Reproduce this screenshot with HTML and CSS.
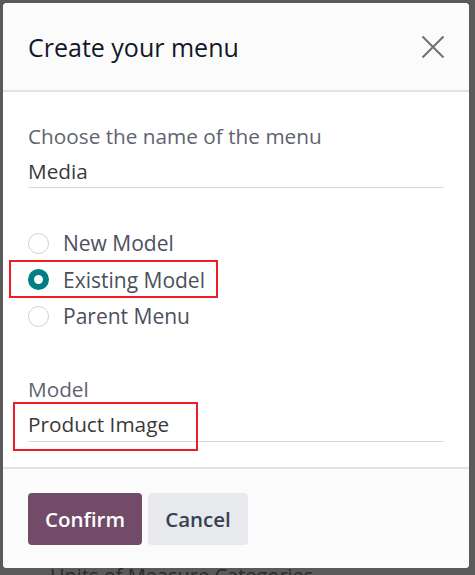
FILE: index.html
```html
<!DOCTYPE html>
<html>
<head>
<meta charset="utf-8">
<link rel="stylesheet" href="styles.css">
</head>
<body>
<div class="page">
  <div class="page-line">Units of Measure Categories</div>
</div>
<div class="modal">
  <div class="modal-header">
    <h1 class="modal-title">Create your menu</h1>
    <svg class="close" width="24" height="24" viewBox="0 0 24 24"><path d="M1.5 1.5 L22.5 22.5 M22.5 1.5 L1.5 22.5" stroke="#707070" stroke-width="2" fill="none"/></svg>
  </div>
  <div class="modal-body">
    <div class="field">
      <div class="label">Choose the name of the menu</div>
      <div class="input">Media</div>
    </div>
    <div class="radios">
      <div class="radio"><span class="dot"></span><span>New Model</span></div>
      <div class="radio checked highlight"><span class="dot"></span><span>Existing Model</span></div>
      <div class="radio"><span class="dot"></span><span>Parent Menu</span></div>
    </div>
    <div class="field model">
      <div class="label">Model</div>
      <div class="input boxed">Product Image</div>
    </div>
  </div>
  <div class="modal-footer">
    <button class="btn primary">Confirm</button>
    <button class="btn secondary">Cancel</button>
  </div>
</div>
</body>
</html>
```

FILE: styles.css
```css
html, body {
  margin: 0;
  padding: 0;
}
body {
  width: 475px;
  height: 575px;
  background: #5a5a5a;
  font-family: "Open Sans", "Noto Sans", sans-serif;
  position: relative;
  overflow: hidden;
}
.page {
  height: 575px;
  display: flex;
  flex-direction: column;
  justify-content: flex-end;
}
.page-line {
  padding-left: 50px;
  font-size: 20px;
  color: #2a2a2a;
  line-height: 20px;
  margin-bottom: -11px;
}
.modal {
  position: absolute;
  left: 3px;
  top: 3px;
  width: 466px;
  height: 565px;
  background: #fff;
  border-radius: 4px;
  display: flex;
  flex-direction: column;
  overflow: hidden;
}
.modal-header {
  height: 89px;
  box-sizing: border-box;
  background: #fbfbfb;
  border-bottom: 2px solid #e2e2e4;
  display: flex;
  align-items: center;
  justify-content: space-between;
  padding: 0 24px 0 25px;
}
.modal-title {
  margin: 0;
  font-size: 25px;
  font-weight: 500;
  color: #111827;
}
.modal-body {
  flex: 1;
  padding: 30px 25px 0;
}
.label {
  font-size: 20.75px;
  color: #5f636f;
  line-height: 28px;
}
.input {
  font-size: 20.75px;
  color: #3a3a3a;
  line-height: 28px;
  margin-top: 7px;
  padding-bottom: 2px;
  border-bottom: 1.5px solid #d8d8d8;
  position: relative;
}
.radios {
  margin-top: 41px;
  display: flex;
  flex-direction: column;
  gap: 8.5px;
}
.radio {
  display: flex;
  align-items: center;
  gap: 14px;
  font-size: 21px;
  color: #4b5060;
  line-height: 28px;
  position: relative;
}
.dot {
  width: 21px;
  height: 21px;
  border-radius: 50%;
  border: 1.5px solid #cfcfcf;
  box-sizing: border-box;
  flex: none;
}
.radio.checked .dot {
  border: 6.5px solid #017e84;
  background: #fff;
}
.highlight::after {
  content: "";
  position: absolute;
  left: -19px;
  top: -6px;
  width: 205px;
  height: 34px;
  border: 2px solid #ee1c24;
}
.model {
  margin-top: 45px;
}
.model .input {
  padding-bottom: 3px;
}
.boxed::after {
  content: "";
  position: absolute;
  left: -15px;
  top: -8px;
  width: 181px;
  height: 45px;
  border: 2px solid #ee1c24;
}
.modal-footer {
  height: 101px;
  flex: none;
  background: #fbfbfb;
  border-top: 2px solid #e2e2e4;
  display: flex;
  align-items: flex-start;
  gap: 6px;
  padding: 24px 25px 0;
  box-sizing: border-box;
}
.btn {
  height: 52px;
  border: none;
  border-radius: 4px;
  font-family: inherit;
  font-size: 20.5px;
  font-weight: 600;
  padding: 0;
}
.primary {
  background: #714b67;
  color: #fff;
  width: 114px;
}
.secondary {
  background: #e7e9ed;
  color: #374151;
  width: 100px;
}
```
